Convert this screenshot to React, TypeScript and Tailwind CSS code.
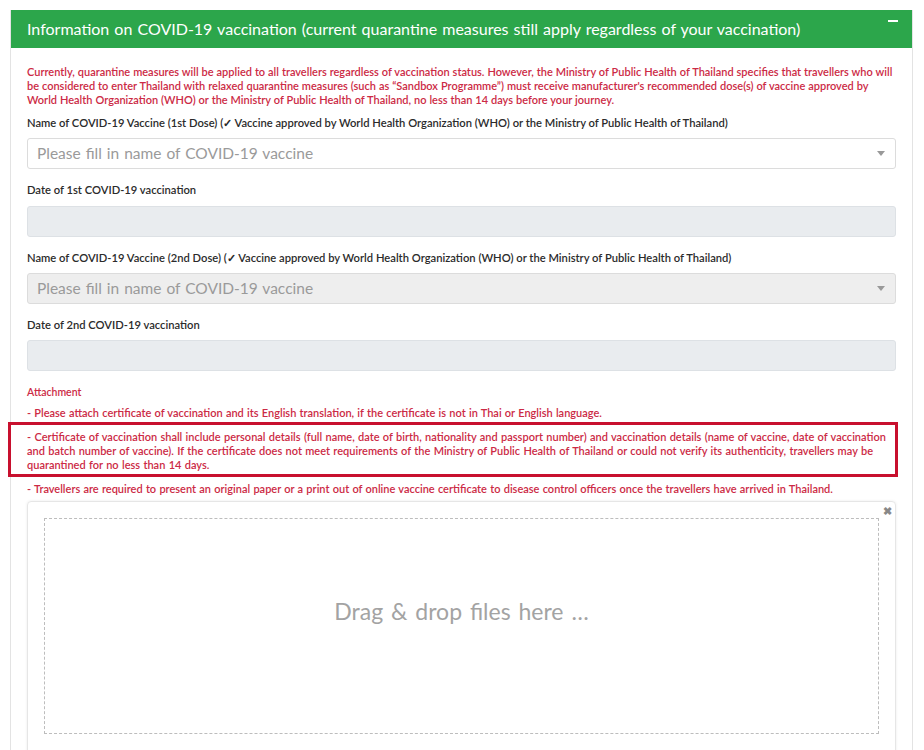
import React from 'react';

const font = { fontFamily: 'Lato, "Open Sans", sans-serif' };

const Label: React.FC<{ children: React.ReactNode }> = ({ children }) => (
  <p className="text-[11.2px] font-semibold text-[#2b2b2b] leading-[14px] whitespace-nowrap">{children}</p>
);

const SelectBox: React.FC<{ disabled?: boolean }> = ({ disabled }) => (
  <div
    className={`h-[31px] rounded-[3px] border border-[#dcdcdc] flex items-center justify-between pl-[9px] pr-[10px] ${
      disabled ? 'bg-[#eeeeee]' : 'bg-white'
    }`}
  >
    <span className="text-[15.5px] text-[#9a9a9a] [word-spacing:1px]">Please fill in name of COVID-19 vaccine</span>
    <svg width="8" height="5" viewBox="0 0 8 5">
      <path d="M0 0 L8 0 L4 5 Z" fill="#999" />
    </svg>
  </div>
);

const DateBox = () => <div className="h-[31px] rounded-[3px] border border-[#dde1e5] bg-[#e9ecef]" />;

export default function App() {
  return (
    <div className="w-[924px] h-[750px] bg-white overflow-hidden pt-[10px] pl-[10px] pr-[11px]" style={font}>
      <div className="border-x border-[#e3e3e3] h-[740px]">
        {/* header */}
        <div className="h-[38px] bg-[#2ca64b] flex items-center justify-between pl-[16px] pr-[14px]">
          <h2 className="text-[16px] text-white [word-spacing:1px] whitespace-nowrap">
            Information on COVID-19 vaccination (current quarantine measures still apply regardless of your vaccination)
          </h2>
          <span className="w-[10px] h-[2px] bg-white -mt-[17px]" />
        </div>

        <div className="px-[16px] pt-[17px]">
          <div className="text-[11px] font-semibold text-[#cc2a45] leading-[14px] whitespace-nowrap [word-spacing:0.2px]">
            <p>
              Currently, quarantine measures will be applied to all travellers regardless of vaccination status. However, the Ministry of Public Health of Thailand specifies that travellers who will
            </p>
            <p>
              be considered to enter Thailand with relaxed quarantine measures (such as “Sandbox Programme”) must receive manufacturer's recommended dose(s) of vaccine approved by
            </p>
            <p>World Health Organization (WHO) or the Ministry of Public Health of Thailand, no less than 14 days before your journey.</p>
          </div>

          <div className="mt-[9px]">
            <Label>
              Name of COVID-19 Vaccine (1st Dose) (✓ Vaccine approved by World Health Organization (WHO) or the Ministry of Public Health of Thailand)
            </Label>
            <div className="mt-[8px]">
              <SelectBox />
            </div>
          </div>

          <div className="mt-[14px]">
            <Label>Date of 1st COVID-19 vaccination</Label>
            <div className="mt-[9px]">
              <DateBox />
            </div>
          </div>

          <div className="mt-[14px]">
            <Label>
              Name of COVID-19 Vaccine (2nd Dose) (✓ Vaccine approved by World Health Organization (WHO) or the Ministry of Public Health of Thailand)
            </Label>
            <div className="mt-[8px]">
              <SelectBox disabled />
            </div>
          </div>

          <div className="mt-[14px]">
            <Label>Date of 2nd COVID-19 vaccination</Label>
            <div className="mt-[8px]">
              <DateBox />
            </div>
          </div>

          <div className="mt-[14px] text-[11px] font-semibold text-[#cc2a45] leading-[14px] whitespace-nowrap [word-spacing:0.5px]">
            <p className="text-[10.5px] [word-spacing:0px]">Attachment</p>
            <p className="mt-[7px]">
              - Please attach certificate of vaccination and its English translation, if the certificate is not in Thai or English language.
            </p>
            <div className="-ml-[19px] -mr-[2px] mt-[2px] border-[3px] border-[#c8102e] pl-[16px] pt-[5px] pb-[2px] [word-spacing:0.6px]">
              <p>
                - Certificate of vaccination shall include personal details (full name, date of birth, nationality and passport number) and vaccination details (name of vaccine, date of vaccination
              </p>
              <p>
                and batch number of vaccine). If the certificate does not meet requirements of the Ministry of Public Health of Thailand or could not verify its authenticity, travellers may be
              </p>
              <p>quarantined for no less than 14 days.</p>
            </div>
            <p className="mt-[5px]">
              - Travellers are required to present an original paper or a print out of online vaccine certificate to disease control officers once the travellers have arrived in Thailand.
            </p>
          </div>

          {/* dropzone */}
          <div className="relative mt-[5px] h-[260px] border border-[#e6e6e6] rounded-[4px] shadow-[0_0_3px_rgba(0,0,0,0.08)] px-[16px] pt-[16px]">
            <span className="absolute right-[3px] top-[1px] text-[11px] font-bold text-[#888]">✖</span>
            <div className="h-[216px] border border-dashed border-[#bdbdbd] flex justify-center pt-[75px]">
              <span className="text-[23px] text-[#a3a3a3] [word-spacing:2px]">Drag &amp; drop files here …</span>
            </div>
          </div>
        </div>
      </div>
    </div>
  );
}
